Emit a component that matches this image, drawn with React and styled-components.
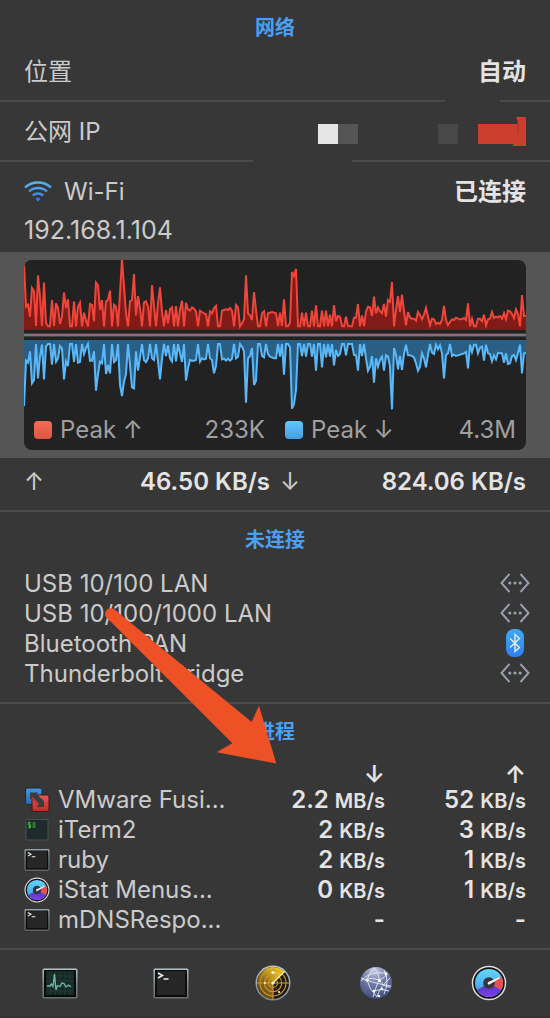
import React from "react";
import styled, { createGlobalStyle } from "styled-components";

const colors = {
  panel: "#373737",
  line: "#4b4b4b",
  band: "#555555",
  chart: "#222222",
  label: "#cbcbcb",
  value: "#e4e4e4",
  legend: "#a0a0a0",
  accent: "#4aa0f6",
};

const GlobalStyle = createGlobalStyle`
  * { box-sizing: border-box; }
  body {
    margin: 0;
    background: ${colors.panel};
    color: ${colors.label};
    font-family: Inter, "Noto Sans CJK SC", sans-serif;
    font-size: 24px;
    line-height: 30px;
  }
`;

const Panel = styled.main`
  position: relative;
  width: 100%;
  overflow: hidden;
  border-bottom: 2px solid #323232;
`;

const Section = styled.section`
  padding-bottom: ${(p) => p.$bottom || 0}px;
`;

const Divider = styled.hr`
  height: 2px;
  margin: 0;
  border: 0;
  background: ${(p) =>
    p.$gap
      ? `linear-gradient(90deg, ${colors.line} ${p.$gap[0]}%, transparent ${p.$gap[0]}% ${p.$gap[1]}%, ${colors.line} ${p.$gap[1]}%)`
      : colors.line};
`;

const Title = styled.h2`
  height: 42px;
  margin: 0;
  padding: 13px 24px 0;
  color: ${colors.accent};
  font-size: 20px;
  line-height: 30px;
  font-weight: 600;
  text-align: center;
`;

const Row = styled.div`
  display: flex;
  align-items: center;
  justify-content: space-between;
  padding: 15px 24px 13px;
`;

const Label = styled.span`
  display: flex;
  align-items: center;
  gap: 12px;
`;

const Value = styled.span`
  color: ${colors.value};
  font-weight: 600;
`;

const Address = styled.div`
  padding: 0 24px 7px;
  margin-top: -5px;
  font-size: 25px;
`;

const Band = styled.div`
  padding: 8px 24px;
  background: ${colors.band};
`;

const ChartCard = styled.figure`
  margin: 0;
  overflow: hidden;
  border-radius: 8px;
  background: ${colors.chart};
`;

const Graph = styled.svg`
  display: block;
  width: 100%;
  height: 150px;
`;

const Legend = styled.figcaption`
  display: grid;
  grid-template-columns: 1fr 1fr;
  column-gap: 20px;
  padding: 5px 10px;
  color: ${colors.legend};
`;

const LegendItem = styled.div`
  display: flex;
  align-items: center;
  justify-content: space-between;
`;

const LegendName = styled.span`
  display: flex;
  align-items: center;
  gap: 8px;
`;

const Swatch = styled.i`
  width: 18px;
  height: 18px;
  border-radius: 4px;
  background: linear-gradient(${(p) => p.$from}, ${(p) => p.$to});
`;

const Rates = styled.div`
  display: grid;
  grid-template-columns: 1fr 1fr;
  column-gap: 10px;
  padding: 9px 24px 13px;
`;

const Rate = styled.div`
  display: flex;
  justify-content: space-between;
`;

const Ports = styled.ul`
  list-style: none;
  margin: 14px 0 0;
  padding: 0 20px 0 24px;
`;

const Port = styled.li`
  display: flex;
  align-items: center;
  justify-content: space-between;
  height: 30px;
`;

const PortName = styled.span`
  padding-top: 2px;
`;

const PortIcon = styled.span`
  display: flex;
  justify-content: center;
  width: 30px;
`;

const Processes = styled.table`
  width: 100%;
  margin-top: 19px;
  border-collapse: collapse;
  table-layout: fixed;
`;

const HeadCell = styled.th`
  width: ${(p) => p.$width || "auto"};
  height: 20px;
  padding: 0 ${(p) => p.$end || 0}px 0 0;
  color: ${colors.value};
  font-weight: 600;
  line-height: 20px;
  text-align: right;
`;

const NameCell = styled.td`
  height: 30px;
  padding: 0 0 0 24px;
`;

const ProcessName = styled.span`
  display: flex;
  align-items: center;
  gap: 8px;
  white-space: nowrap;
`;

const SpeedCell = styled.td`
  height: 30px;
  padding: 0 ${(p) => p.$end || 0}px 0 0;
  color: ${colors.value};
  font-weight: 600;
  text-align: right;
  white-space: nowrap;
`;

const Unit = styled.small`
  font-size: 20px;
  line-height: 24px;
`;

const Dock = styled.nav`
  display: grid;
  grid-template-columns: 120fr 102fr 102fr 104fr 122fr;
  justify-items: center;
  padding: 15px 0;
`;

const DockButton = styled.button`
  display: flex;
  align-items: center;
  justify-content: center;
  width: 36px;
  height: 36px;
  padding: 0;
  border: 0;
  background: none;
  cursor: pointer;
`;

const Pointer = styled.svg`
  position: absolute;
  left: 104px;
  top: 606px;
`;

const upload = [
  40, 170, 164, 200, 114, 124, 228, 76, 140, 228, 98, 218, 229, 229, 150, 228, 160, 175, 222, 200, 128, 174, 148, 229, 229, 155, 229, 170, 158, 229,
  188, 212, 229, 162, 165, 214, 98, 106, 180, 150, 229, 154, 150, 122, 229, 164, 170, 229, 130, 28, 110, 190, 229, 154, 150, 72, 196, 138, 175, 229,
  158, 154, 170, 229, 105, 170, 229, 160, 112, 185, 229, 180, 220, 178, 172, 229, 168, 229, 178, 152, 229, 158, 178, 182, 172, 176, 184, 229, 182, 186,
  190, 192, 229, 184, 190, 174, 168, 229, 229, 182, 180, 178, 180, 174, 182, 229, 165, 172, 229, 220, 208, 76, 190, 196, 210, 126, 180, 229, 229, 190,
  184, 229, 190, 188, 186, 188,
  190, 228, 188, 228, 148, 229, 229, 218, 66, 78, 56, 229, 229, 188, 229, 188, 229, 229, 182, 229, 166, 229, 229, 182, 229, 182, 229, 194, 229, 165,
  214, 198, 200, 228, 229, 200, 228, 229, 229, 203, 203, 162, 229, 196, 228, 185, 170, 172, 198, 140, 190, 172, 184, 190, 162, 200, 150, 155, 96, 229,
  180, 138, 186, 134, 184, 226, 186, 203, 206, 206, 212, 186, 196, 208, 194, 174, 200, 226, 206, 208, 222, 218, 222, 210, 168, 210, 225, 216, 208, 210,
  203, 206, 208, 208, 204, 210, 160, 229, 206, 229, 229, 206, 206, 214, 194, 226, 208, 206, 186, 204, 200, 202, 198, 206, 190, 208, 182, 184, 192, 204,
  178, 192, 229, 135, 198, 198,
];

const download = [
  468, 332, 338, 304, 400, 390, 282, 385, 320, 284, 388, 290, 282, 282, 344, 282, 335, 325, 288, 295, 388, 334, 348, 282, 282, 336, 282, 338, 336, 282,
  312, 294, 282, 332, 332, 304, 422, 372, 335, 340, 282, 372, 345, 370, 282, 336, 330, 282, 405, 438, 395, 372, 282, 345, 412, 415, 304, 362, 322, 282,
  330, 336, 325, 282, 325, 330, 282, 334, 388, 325, 282, 318, 286, 325, 334, 282, 334, 282, 310, 336, 282, 392, 355, 330, 332, 332, 330, 282, 335, 325,
  328, 326, 282, 325, 330, 370, 348, 282, 282, 328, 326, 332, 326, 332, 326, 282, 325, 320, 282, 290, 304, 458, 325, 318, 294, 405, 392, 282, 282, 318,
  322, 282, 312, 320, 322, 325,
  325, 282, 320, 282, 374, 282, 282, 292, 476, 462, 420, 282, 282, 318, 282, 320, 282, 282, 320, 282, 362, 282, 282, 352, 282, 322, 282, 320, 282, 346,
  300, 318, 312, 282, 282, 316, 282, 282, 282, 315, 316, 362, 282, 318, 282, 325, 362, 350, 318, 398, 325, 350, 330, 320, 362, 316, 320, 350, 478, 294,
  315, 358, 318, 360, 312, 284, 316, 316, 318, 322, 340, 362, 350, 310, 325, 352, 315, 282, 308, 312, 284, 298, 286, 310, 385, 315, 310, 282, 318, 314,
  318, 316, 314, 312, 310, 306, 355, 284, 306, 284, 284, 310, 294, 290, 332, 284, 310, 312, 334, 316, 328, 308, 310, 310, 338, 310, 342, 340, 318, 315,
  330, 308, 284, 370, 310, 310,
];

const toPoints = (samples) => samples.map((y, i) => `${i * 6},${y}`).join(" ");

function TrafficGraph() {
  const up = toPoints(upload);
  const down = toPoints(download);
  return (
    <Graph viewBox="0 30 1506 450" preserveAspectRatio="none" role="img" aria-label="Network traffic">
      <polygon points={`0,240 ${up} 1506,240`} fill="#801b17" />
      <polyline points={up} fill="none" stroke="#ef463b" strokeWidth="6" />
      <rect x="0" y="249" width="1506" height="12" fill="#444" />
      <rect x="0" y="252" width="1506" height="6" fill="#777" />
      <polygon points={`0,270 ${down} 1506,270`} fill="#2a5f85" />
      <polyline points={down} fill="none" stroke="#5ab8f8" strokeWidth="6" />
    </Graph>
  );
}

function MaskedAddress() {
  return (
    <svg width="208" height="30" viewBox="0 0 208 30" role="img" aria-label="Hidden">
      <rect x="0" y="7" width="20" height="20" fill="#e6e6e6" />
      <rect x="20" y="7" width="20" height="20" fill="#555" />
      <rect x="120" y="7" width="20" height="20" fill="#484848" />
      <path d="M160 7H200Q200 3 198 0H208V29H194L196 27H160Z" fill="#cc3f2f" />
      <path d="M200 7Q201 12 200 17" stroke="#a93628" fill="none" />
    </svg>
  );
}

function WifiIcon() {
  return (
    <svg width="28" height="24" viewBox="0 0 28 24" aria-hidden="true">
      <defs>
        <linearGradient id="wifi" gradientUnits="userSpaceOnUse" x1="0" y1="1" x2="0" y2="23">
          <stop offset="0" stopColor="#5db4ee" />
          <stop offset="1" stopColor="#2b72dc" />
        </linearGradient>
      </defs>
      <g fill="none" stroke="url(#wifi)" strokeWidth="2.400">
        <path d="M1 7.500C8.200 0.800 19.800 0.800 27 7.500" />
        <path d="M5 11.500C10 6.800 18 6.800 23 11.500" />
        <path d="M8.800 15.500C11.800 12.800 16.200 12.800 19.200 15.500" />
      </g>
      <path d="M14 21.800L11.800 19.500Q11.600 17.500 14 17.500T16.200 19.500Z" fill="#2f79e0" />
    </svg>
  );
}

function EthernetIcon() {
  return (
    <svg width="30" height="20" viewBox="0 0 30 20" aria-hidden="true">
      <g fill="none" stroke="#9aa0b2" strokeWidth="1.900">
        <path d="M9.500 1L1.500 10L9.500 19M20.500 1L28.500 10L20.500 19" />
      </g>
      <g fill="#9aa0b2">
        <circle cx="9.800" cy="10" r="1.600" />
        <circle cx="15" cy="10" r="1.600" />
        <circle cx="20.200" cy="10" r="1.600" />
      </g>
    </svg>
  );
}

function BluetoothIcon() {
  return (
    <svg width="20" height="30" viewBox="0 0 20 30" aria-hidden="true">
      <defs>
        <linearGradient id="bt" x1="0" y1="0" x2="0" y2="1">
          <stop offset="0" stopColor="#3fa9f5" />
          <stop offset="1" stopColor="#2c80f5" />
        </linearGradient>
      </defs>
      <rect x="1" y="1" width="18" height="28" rx="8" fill="url(#bt)" />
      <path d="M5 10.500L14.500 19.500L10 23.500V6.500L14.500 10.500L5 19.500" fill="none" stroke="#e9f3ff" strokeWidth="1.300" />
    </svg>
  );
}

function VMwareIcon() {
  return (
    <svg width="26" height="26" viewBox="0 0 26 26" aria-hidden="true">
      <defs>
        <linearGradient id="vmBlue" x1="0" y1="0" x2="0" y2="1">
          <stop offset="0" stopColor="#4797e0" />
          <stop offset="1" stopColor="#2668b4" />
        </linearGradient>
        <linearGradient id="vmRed" x1="0" y1="0" x2="0" y2="1">
          <stop offset="0" stopColor="#e85a57" />
          <stop offset="1" stopColor="#c42723" />
        </linearGradient>
      </defs>
      <path d="M3.500 1H16Q18 1 18 3V15.500Q18 17.500 16 17.500H3.500Q1.500 17.500 1.500 15.500V3Q1.500 1 3.500 1Z" fill="url(#vmBlue)" stroke="#1a2635" />
      <path d="M10 8H23Q25 8 25 10V22.500Q25 24.500 23 24.500H10Q8 24.500 8 22.500V10Q8 8 10 8Z" fill="url(#vmRed)" stroke="#38181a" />
      <path d="M6 5.500H13.500V8L20 14V20H12.500L14.500 18L8 12H6Z" fill="#3a3b3f" />
      <path d="M8 10.500L14.500 17" fill="none" stroke="#d43a37" strokeWidth="1.400" />
    </svg>
  );
}

function ITermIcon() {
  return (
    <svg width="26" height="24" viewBox="0 0 26 24" aria-hidden="true">
      <rect x="2" y="1.500" width="22" height="20.500" rx="1" fill="#1f2a2d" stroke="#4a5052" />
      <path d="M6.800 4.500H4.500V7H6.500V9.500H4M5.500 3.500V10.500" fill="none" stroke="#3fa83a" strokeWidth="1.200" />
      <rect x="8.500" y="4" width="3" height="6" fill="#2e7d2a" />
    </svg>
  );
}

function TerminalIcon({ width, height }) {
  return (
    <svg width={width} height={height} viewBox="0 0 36 31" aria-hidden="true">
      <defs>
        <linearGradient id="frame" x1="0" y1="0" x2="0" y2="1">
          <stop offset="0" stopColor="#b5c6cc" />
          <stop offset="0.500" stopColor="#7e8a8e" />
          <stop offset="1" stopColor="#6c6e6f" />
        </linearGradient>
      </defs>
      <rect x="0.500" y="0.500" width="35" height="30" rx="1.500" fill="url(#frame)" />
      <rect x="2" y="2" width="32" height="27" fill="#0c0c0c" />
      <rect x="4" y="3" width="28" height="24" fill="#262626" />
      <path d="M5 5L9.500 7.500L5 10M10.500 11H15.500" fill="none" stroke="#eee" strokeWidth="1.500" />
    </svg>
  );
}

function GaugeIcon({ size }) {
  return (
    <svg width={size} height={size} viewBox="0 0 36 36" aria-hidden="true">
      <defs>
        <linearGradient id="gaugeSky" x1="0" y1="0" x2="0" y2="1">
          <stop offset="0" stopColor="#62d8fa" />
          <stop offset="1" stopColor="#3c93ea" />
        </linearGradient>
        <linearGradient id="gaugeViolet" x1="0" y1="0" x2="0" y2="1">
          <stop offset="0" stopColor="#4b35c0" />
          <stop offset="1" stopColor="#8440e6" />
        </linearGradient>
      </defs>
      <circle cx="18" cy="18" r="16.500" fill="#101014" stroke="#dededf" strokeWidth="1.500" />
      <circle cx="18" cy="18" r="14" fill="url(#gaugeSky)" />
      <path d="M18 18L5.900 25A14 14 0 0 0 30.100 25Z" fill="url(#gaugeViolet)" />
      <path d="M18 18L30.100 25A14 14 0 0 0 30.500 11.500Z" fill="#ec4f52" />
      <circle cx="18" cy="18" r="5.800" fill="#34353c" />
      <path d="M17.200 17L28.500 12L29 13.300L18.800 19.300A1.400 1.400 0 0 1 17.200 17Z" fill="#f6f1f2" />
    </svg>
  );
}

function ActivityIcon() {
  return (
    <svg width="36" height="31" viewBox="0 0 36 31" aria-hidden="true">
      <rect x="0.500" y="0.500" width="35" height="30" rx="1.500" fill="url(#frame)" />
      <rect x="2" y="2" width="32" height="27" fill="#060a09" />
      <rect x="4" y="3" width="28" height="24" fill="#172924" />
      <path d="M4 8H32M4 13H32M4 18H32M4 23H32M8 3V27M13 3V27M18 3V27M23 3V27M28 3V27" stroke="#264038" strokeWidth="0.800" />
      <path d="M5 18H8L9.500 16L11 18.500L12.500 6L14 22L15.500 17.500L18 18.500L20 15L22 15.500L24 19L26.500 17L29 19" fill="none" stroke="#6fb9a6" strokeWidth="1.300" />
    </svg>
  );
}

function RadarIcon() {
  return (
    <svg width="36" height="36" viewBox="0 0 36 36" aria-hidden="true">
      <defs>
        <linearGradient id="radarRim" x1="0" y1="0" x2="0" y2="1">
          <stop offset="0" stopColor="#b8c3ce" />
          <stop offset="1" stopColor="#818c98" />
        </linearGradient>
        <linearGradient id="radarSweep" x1="0" y1="1" x2="1" y2="0">
          <stop offset="0" stopColor="#4b3510" />
          <stop offset="0.400" stopColor="#8a651a" />
          <stop offset="0.750" stopColor="#e0bb22" />
          <stop offset="1" stopColor="#f4da2a" />
        </linearGradient>
      </defs>
      <circle cx="18" cy="18" r="17.500" fill="url(#radarRim)" />
      <circle cx="18" cy="18" r="16" fill="#201b12" />
      <path d="M18 18L29.300 6.700A16 16 0 1 0 18 34Z" fill="url(#radarSweep)" />
      <g fill="none" stroke="#cf982f" strokeWidth="1.100">
        <circle cx="18" cy="18" r="4.500" />
        <circle cx="18" cy="18" r="8.700" />
        <circle cx="18" cy="18" r="13" />
        <path d="M18 2V34M2 18H34" />
      </g>
      <path d="M17.500 18.500L29.500 6.500" stroke="#fff5a8" strokeWidth="1.300" />
      <g fill="#fff6cf">
        <circle cx="18" cy="18" r="1.600" />
        <circle cx="18" cy="7.500" r="1.500" />
        <circle cx="10" cy="18" r="1.100" />
        <circle cx="24" cy="27" r="1.100" />
      </g>
    </svg>
  );
}

function GlobeIcon() {
  return (
    <svg width="34" height="34" viewBox="0 0 34 34" aria-hidden="true">
      <defs>
        <radialGradient id="globe" cx="0.450" cy="0.100" r="0.900">
          <stop offset="0" stopColor="#c5cae0" />
          <stop offset="0.450" stopColor="#727da8" />
          <stop offset="1" stopColor="#3f4b7c" />
        </radialGradient>
      </defs>
      <circle cx="17" cy="17" r="16" fill="url(#globe)" />
      <g fill="none" stroke="#e3e8f8" strokeWidth="0.900">
        <path d="M2 12Q13 17 32 20M2 15Q10 5 27 7M8 14Q10 23 18 31M20 14Q16 23 14 31M20 14Q26 22 32 21M20 14Q11 11 8 14M20 14Q20 6 15 2M20 14Q26 12 28 8M8 14Q10 7 15 2M25 4Q31 15 25 28M14 25Q23 22 30 25M18 31Q20 22 31 12" />
      </g>
      <g fill="#fff">
        <circle cx="8" cy="14" r="1.700" />
        <circle cx="20.500" cy="14.500" r="1.500" />
        <circle cx="27" cy="8" r="1.400" />
        <circle cx="15" cy="25" r="1.300" />
        <circle cx="20" cy="30" r="1.300" />
        <circle cx="23" cy="23" r="1.200" />
      </g>
    </svg>
  );
}

const ports = [
  { name: "USB 10/100 LAN", icon: <EthernetIcon /> },
  { name: "USB 10/100/1000 LAN", icon: <EthernetIcon /> },
  { name: "Bluetooth PAN", icon: <BluetoothIcon /> },
  { name: "Thunderbolt Bridge", icon: <EthernetIcon /> },
];

const processes = [
  { name: "VMware Fusi...", icon: <VMwareIcon />, down: ["2.2", "MB/s"], up: ["52", "KB/s"] },
  { name: "iTerm2", icon: <ITermIcon />, down: ["2", "KB/s"], up: ["3", "KB/s"] },
  { name: "ruby", icon: <TerminalIcon width={26} height={22} />, down: ["2", "KB/s"], up: ["1", "KB/s"] },
  { name: "iStat Menus...", icon: <GaugeIcon size={26} />, down: ["0", "KB/s"], up: ["1", "KB/s"] },
  { name: "mDNSRespo...", icon: <TerminalIcon width={26} height={22} />, down: ["-"], up: ["-"] },
];

const apps = [
  { name: "Activity Monitor", icon: <ActivityIcon /> },
  { name: "Terminal", icon: <TerminalIcon width={36} height={31} /> },
  { name: "Network Radar", icon: <RadarIcon /> },
  { name: "Network Utility", icon: <GlobeIcon /> },
  { name: "iStat Menus", icon: <GaugeIcon size={36} /> },
];

function Speed({ value: [amount, unit], end }) {
  return (
    <SpeedCell $end={end}>
      {unit ? `${amount} ` : amount}
      {unit && <Unit>{unit}</Unit>}
    </SpeedCell>
  );
}

export default function App() {
  return (
    <Panel>
      <GlobalStyle />
      <Section>
        <Title>网络</Title>
        <Row>
          <Label>位置</Label>
          <Value>自动</Value>
        </Row>
      </Section>
      <Divider $gap={[81, 91]} />
      <Section>
        <Row>
          <Label>公网 IP</Label>
          <MaskedAddress />
        </Row>
      </Section>
      <Divider $gap={[46, 64]} />
      <Section>
        <Row>
          <Label>
            <WifiIcon />
            Wi-Fi
          </Label>
          <Value>已连接</Value>
        </Row>
        <Address>192.168.1.104</Address>
        <Band>
          <ChartCard>
            <TrafficGraph />
            <Legend>
              <LegendItem>
                <LegendName>
                  <Swatch $from="#f26d55" $to="#dc5642" />
                  Peak ↑
                </LegendName>
                <span>233K</span>
              </LegendItem>
              <LegendItem>
                <LegendName>
                  <Swatch $from="#62c6fb" $to="#449fe6" />
                  Peak ↓
                </LegendName>
                <span>4.3M</span>
              </LegendItem>
            </Legend>
          </ChartCard>
        </Band>
        <Rates>
          <Rate>
            <span>↑</span>
            <Value>46.50 KB/s</Value>
          </Rate>
          <Rate>
            <span>↓</span>
            <Value>824.06 KB/s</Value>
          </Rate>
        </Rates>
      </Section>
      <Divider />
      <Section $bottom={14}>
        <Title>未连接</Title>
        <Ports>
          {ports.map((port) => (
            <Port key={port.name}>
              <PortName>{port.name}</PortName>
              <PortIcon>{port.icon}</PortIcon>
            </Port>
          ))}
        </Ports>
      </Section>
      <Divider />
      <Section $bottom={13}>
        <Title>进程</Title>
        <Processes>
          <thead>
            <tr>
              <HeadCell aria-label="Process" />
              <HeadCell $width="130px">↓</HeadCell>
              <HeadCell $width="165px" $end={24}>↑</HeadCell>
            </tr>
          </thead>
          <tbody>
            {processes.map((process) => (
              <tr key={process.name}>
                <NameCell>
                  <ProcessName>
                    {process.icon}
                    {process.name}
                  </ProcessName>
                </NameCell>
                <Speed value={process.down} />
                <Speed value={process.up} end={24} />
              </tr>
            ))}
          </tbody>
        </Processes>
      </Section>
      <Divider />
      <Dock aria-label="Applications">
        {apps.map((app) => (
          <DockButton key={app.name} type="button" aria-label={app.name}>
            {app.icon}
          </DockButton>
        ))}
      </Dock>
      <Pointer width="174" height="160" viewBox="104 606 174 160" aria-hidden="true">
        <path d="M105.500 616.500Q104 612 107 609.500Q110.500 607 114.500 609.500L251.700 722L259 705.700L276.300 763.500L216.700 752.300L232.300 743.300Z" fill="#ef5126" />
      </Pointer>
    </Panel>
  );
}
